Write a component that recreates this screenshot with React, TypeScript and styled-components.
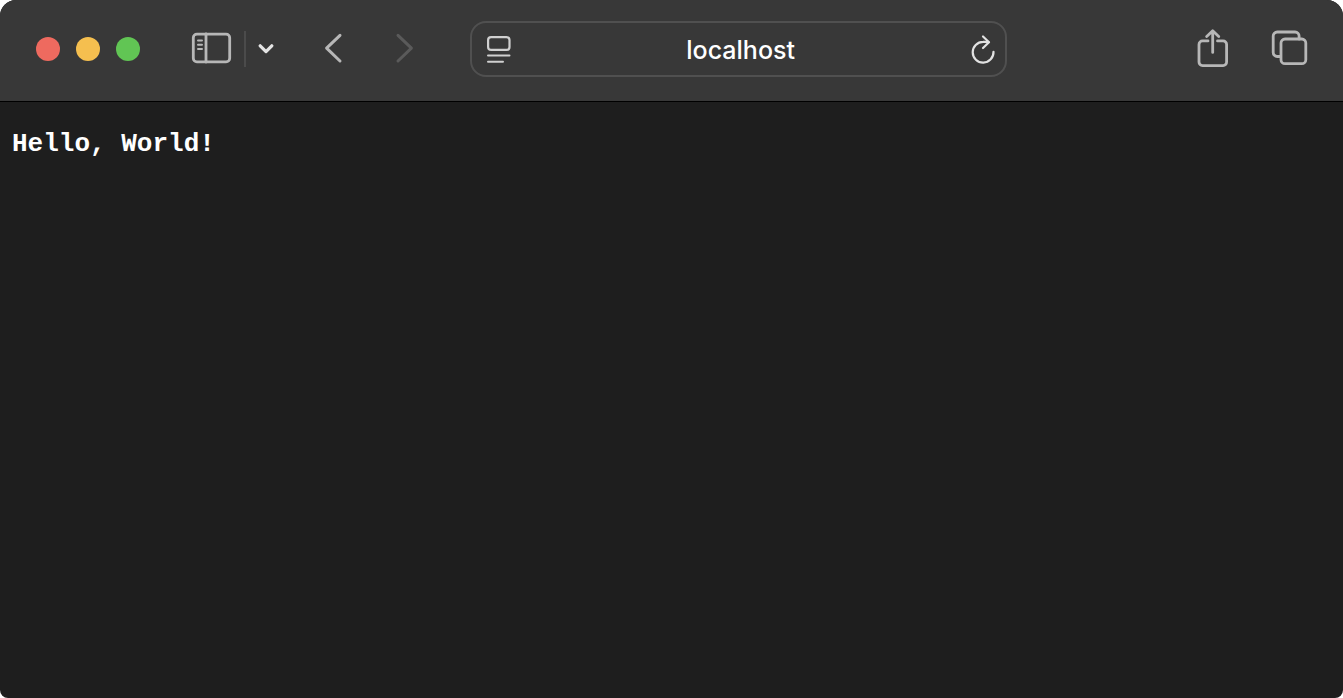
import React from "react";
import styled, { createGlobalStyle } from "styled-components";

const GlobalStyle = createGlobalStyle`
  *, *::before, *::after { box-sizing: border-box; }
  body { margin: 0; background: #ffffff; }
`;

const Window = styled.div`
  display: flex;
  flex-direction: column;
  min-height: 100vh;
  overflow: hidden;
  border-radius: 16px 16px 8px 8px;
  background: #1e1e1e;
  color: #ffffff;
`;

const Toolbar = styled.header`
  display: grid;
  grid-template-columns: 35fr 40fr 25fr;
  align-items: center;
  padding: 21px 0 24px;
  background: #383838;
  border-bottom: 1px solid #000000;
`;

const Group = styled.div<{ $gap?: number }>`
  display: flex;
  align-items: center;
  gap: ${({ $gap = 0 }) => $gap}px;
`;

const Leading = styled(Group)`
  padding-left: 36px;
`;

const Trailing = styled(Group)`
  justify-content: flex-end;
  padding-right: 35px;
`;

const WindowControls = styled(Group)`
  margin-right: 50px;
`;

const WindowControl = styled.button<{ $color: string }>`
  width: 24px;
  height: 24px;
  padding: 0;
  border: 0;
  border-radius: 50%;
  background: ${({ $color }) => $color};
`;

const IconButton = styled.button<{ $color?: string }>`
  display: flex;
  flex: none;
  padding: 0;
  border: 0;
  background: none;
  color: ${({ $color = "#b7b7b7" }) => $color};
`;

const Divider = styled.span`
  width: 2px;
  height: 36px;
  margin-left: 11px;
  margin-right: 12px;
  background: #4b4b4b;
`;

const History = styled(Group)`
  margin-left: 47px;
`;

const AddressBar = styled.form`
  display: flex;
  align-items: center;
  height: 56px;
  padding: 0 10px 0 14px;
  border: 2px solid #505050;
  border-radius: 16px;
`;

const AddressInput = styled.input`
  flex: 1;
  min-width: 0;
  padding: 2px 0 0;
  border: 0;
  outline: 0;
  background: none;
  color: #ffffff;
  font: 500 25px/32px Inter, "Liberation Sans", sans-serif;
  text-align: center;
`;

const Page = styled.main`
  flex: 1;
  padding: 26px 12px;
`;

const Output = styled.pre`
  margin: 0;
  font: 700 26px/32px "Courier", "Liberation Mono", monospace;
`;

type IconProps = {
  width: number;
  height: number;
  stroke?: number;
  children: React.ReactNode;
};

const Icon = ({ width, height, stroke = 2.8, children }: IconProps) => (
  <svg
    width={width}
    height={height}
    viewBox={`0 0 ${width} ${height}`}
    fill="none"
    stroke="currentColor"
    strokeWidth={stroke}
    strokeLinecap="round"
    strokeLinejoin="round"
    aria-hidden="true"
  >
    {children}
  </svg>
);

export default function App() {
  return (
    <>
      <GlobalStyle />
      <Window>
        <Toolbar>
          <Leading>
            <WindowControls $gap={16}>
              <WindowControl type="button" $color="#ee6a5f" aria-label="Close" />
              <WindowControl type="button" $color="#f5bf4f" aria-label="Minimize" />
              <WindowControl type="button" $color="#61c554" aria-label="Zoom" />
            </WindowControls>
            <IconButton type="button" aria-label="Show sidebar">
              <Icon width={43} height={36}>
                <rect x="3.3" y="3.1" width="36.4" height="27.8" rx="3.6" />
                <path d="M16 3v28" />
                <path d="M8 9.4h4M8 13.7h4M8 18h4" strokeWidth="2" />
              </Icon>
            </IconButton>
            <Divider />
            <IconButton type="button" $color="#e4e4e4" aria-label="Tab groups">
              <Icon width={16} height={16} stroke={3.2}>
                <path d="M2.2 4.8 8 10.6l5.8-5.8" />
              </Icon>
            </IconButton>
            <History $gap={48}>
              <IconButton type="button" aria-label="Back">
                <Icon width={24} height={32} stroke={3}>
                  <path d="M19 2.4 5.6 15.2 19 28" />
                </Icon>
              </IconButton>
              <IconButton type="button" $color="#5a5a5a" aria-label="Forward">
                <Icon width={24} height={32} stroke={3}>
                  <path d="M5 2.4 18.4 15.2 5 28" />
                </Icon>
              </IconButton>
            </History>
          </Leading>

          <AddressBar onSubmit={(event) => event.preventDefault()}>
            <IconButton type="button" $color="#d0d0d0" aria-label="Page menu">
              <Icon width={26} height={28} stroke={2.2}>
                <rect x="2.1" y="2.1" width="21.4" height="12.8" rx="3" />
                <path d="M2 20.4h21.500M2 26.700h15" strokeWidth="2" />
              </Icon>
            </IconButton>
            <AddressInput aria-label="Address" defaultValue="localhost" />
            <IconButton type="button" $color="#e2e2e2" aria-label="Reload">
              <Icon width={26} height={30} stroke={2.2}>
                <path d="M24.500 17.800A10.400 10.400 0 1 1 14.100 7.800Q17 7.700 19.600 8.100" />
                <path d="M14 2.500l6 5.700-6 5.800" />
              </Icon>
            </IconButton>
          </AddressBar>

          <Trailing $gap={40}>
            <IconButton type="button" aria-label="Share">
              <Icon width={34} height={40}>
                <path d="M12 11.9H6.500a3.500 3.500 0 0 0-3.500 3.500v17.700a3.500 3.500 0 0 0 3.500 3.500h20.600a3.500 3.500 0 0 0 3.500-3.500V15.400a3.500 3.500 0 0 0-3.500-3.500H21.500" />
                <path d="M16.700 23.400V2M10.700 7.500l6-5.700 6 5.700" />
              </Icon>
            </IconButton>
            <IconButton type="button" aria-label="Show tab overview">
              <Icon width={38} height={40}>
                <path d="M10.500 27.500H7.200a4 4 0 0 1-4-4V7a4 4 0 0 1 4-4h17.900a4 4 0 0 1 4 4v3" />
                <rect x="11" y="10" width="24.800" height="24.700" rx="4" />
              </Icon>
            </IconButton>
          </Trailing>
        </Toolbar>

        <Page>
          <Output>Hello, World!</Output>
        </Page>
      </Window>
    </>
  );
}
